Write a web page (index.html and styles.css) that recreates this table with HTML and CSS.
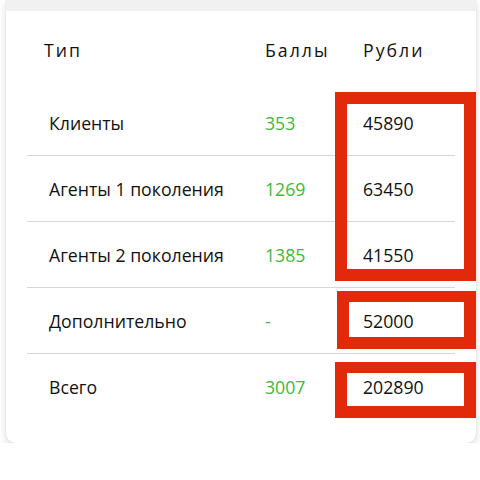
FILE: index.html
```html
<!DOCTYPE html>
<html>
<head>
    <meta charset="utf-8">
    <title>Начисления</title>
    <link rel="stylesheet" href="styles.css">
</head>
<body>
    <div class="card">
        <div class="strip"></div>

        <!-- table head -->
        <div class="row head">
            <span class="type">Тип</span>
            <span class="points">Баллы</span>
            <span class="rub">Рубли</span>
        </div>

        <div class="rows">
            <div class="row">
                <span class="type">Клиенты</span>
                <span class="points">353</span>
                <span class="rub">45890</span>
            </div>
            <div class="row">
                <span class="type">Агенты 1 поколения</span>
                <span class="points">1269</span>
                <span class="rub">63450</span>
            </div>
            <div class="row">
                <span class="type">Агенты 2 поколения</span>
                <span class="points">1385</span>
                <span class="rub">41550</span>
            </div>
            <div class="row">
                <span class="type">Дополнительно</span>
                <span class="points">-</span>
                <span class="rub">52000</span>
            </div>
            <div class="row">
                <span class="type">Всего</span>
                <span class="points">3007</span>
                <span class="rub">202890</span>
            </div>
        </div>

        <!-- red marks drawn over the screenshot -->
        <div class="mark mark-big"></div>
        <div class="mark mark-extra"></div>
        <div class="mark mark-total"></div>
    </div>
</body>
</html>
```

FILE: styles.css
```css
* {
    box-sizing: border-box;
}

body {
    margin: 0;
    background: #fff;
    font-family: "Open Sans", "Inter", sans-serif;
    color: #111;
}

.card {
    position: relative;
    margin: 0 4px 0 6px;
    background: #fff;
    border-radius: 0 0 9px 9px;
    box-shadow: 0 3px 8px rgba(0, 0, 0, 0.14), 0 0 1px rgba(0, 0, 0, 0.2);
    padding-bottom: 23px;
}

.strip {
    height: 11px;
    background: #f1f1f1;
}

.row {
    display: grid;
    align-items: center;
    height: 66px;
    font-size: 17.7px;
}

.head {
    height: 79px;
    padding-left: 38px;
    padding-bottom: 2px;
    grid-template-columns: 221px 98px 1fr;
    letter-spacing: 2px;
}

.rows {
    margin: 0 21px;
}

.rows .row {
    padding-left: 22px;
    grid-template-columns: 216px 98px 1fr;
    border-bottom: 1.5px solid #d6d6d6;
}

.rows .row:last-child {
    border-bottom: none;
}

.points {
    color: #3cba3c;
}

.head .points {
    color: #111;
}

.mark {
    position: absolute;
    border: 12px solid #e2290c;
}

.mark-big {
    left: 329px;
    top: 92px;
    width: 141px;
    height: 189px;
}

.mark-extra {
    left: 331px;
    top: 291px;
    width: 139px;
    height: 58px;
    border-top-width: 11px;
}

.mark-total {
    left: 329px;
    top: 362px;
    width: 141px;
    height: 56px;
    border-top-width: 11px;
}
```
